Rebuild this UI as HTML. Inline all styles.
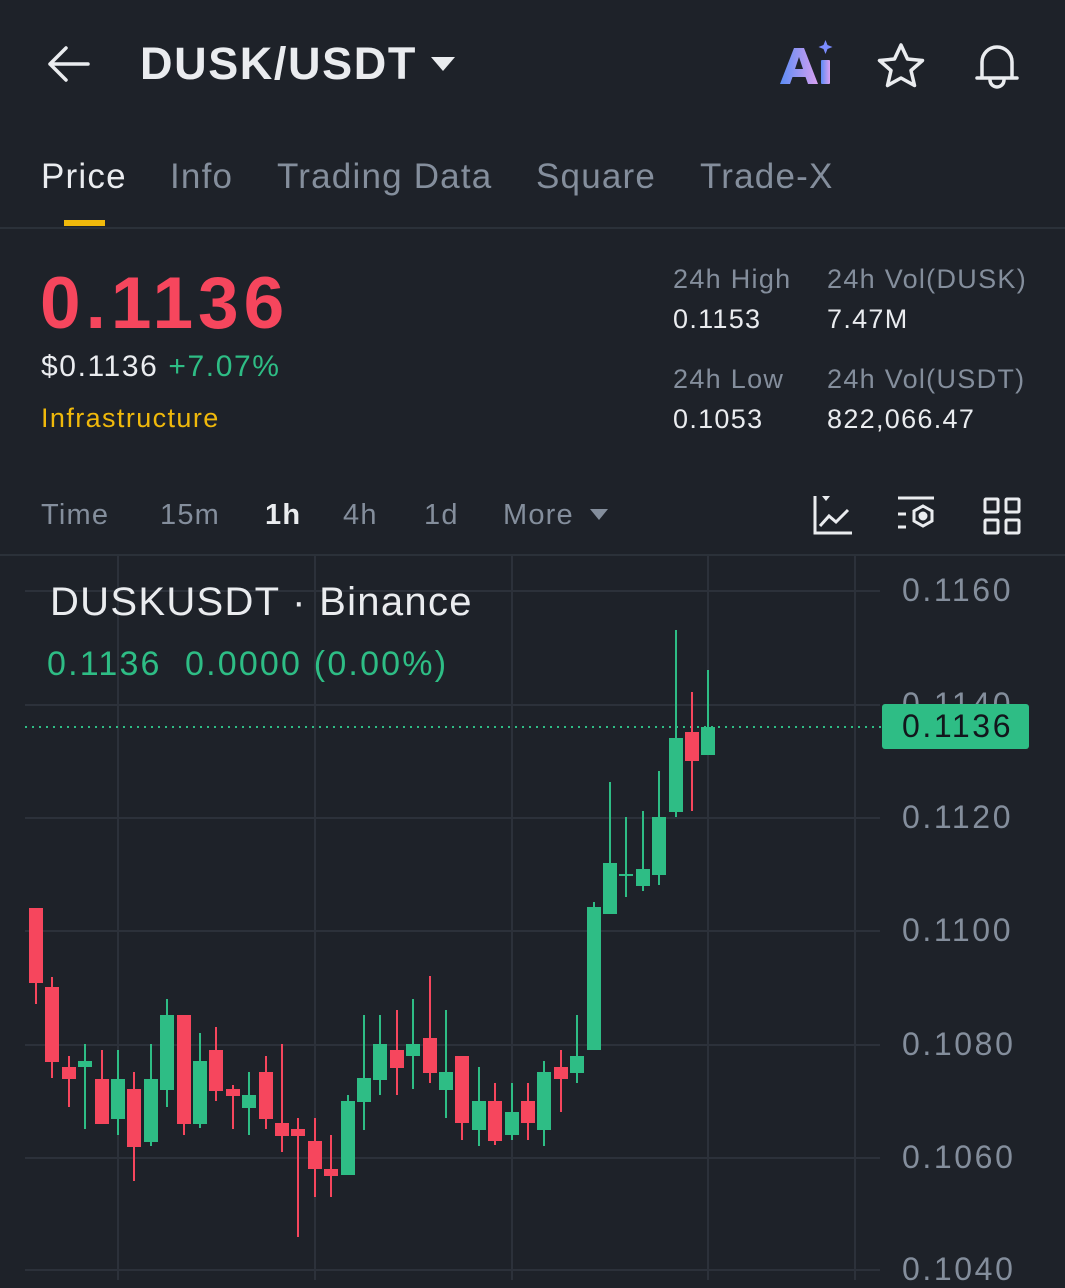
<!DOCTYPE html>
<html><head><meta charset="utf-8"><style>
*{margin:0;padding:0;box-sizing:border-box}
body{width:1065px;height:1280px;background:#1e2229;font-family:"Liberation Sans",sans-serif;color:#eaecef;position:relative;overflow:hidden}
.a{position:absolute;white-space:nowrap}
.g{color:#848e9c}
.t{font-size:35px;letter-spacing:1.2px}
.s{font-size:27px;letter-spacing:1.3px}
.i{font-size:29px;letter-spacing:1.2px}
.ax{font-size:32px;letter-spacing:2.6px}
</style></head><body>
<svg class="a" style="left:44px;top:44px" width="48" height="40" viewBox="0 0 48 40"><path d="M44 20H6M22 4L6 20l16 16" fill="none" stroke="#eaecef" stroke-width="3.5" stroke-linecap="round" stroke-linejoin="round"/></svg>
<div class="a" style="left:140px;top:38px;font-size:45px;font-weight:bold;letter-spacing:1.6px">DUSK/USDT</div>
<svg class="a" style="left:430px;top:56px" width="26" height="16"><path d="M1 1h24L13 15z" fill="#eaecef"/></svg>
<svg class="a" style="left:776px;top:38px" width="60" height="50" viewBox="0 0 60 50">
<defs><linearGradient id="ai" x1="0" x2="1"><stop offset="0" stop-color="#5b8cf5"/><stop offset="1" stop-color="#d8a0f0"/></linearGradient></defs>
<path d="M4 46L18 10h10l14 36h-10l-2.5-7H16.5L14 46z M19 31h8l-4-12z" fill="url(#ai)"/>
<rect x="45" y="22" width="9" height="24" rx="1" fill="url(#ai)"/>
<path d="M49.5 2l2 5 5 2-5 2-2 5-2-5-5-2 5-2z" fill="#7b8cff"/>
</svg>
<svg class="a" style="left:876px;top:42px" width="50" height="46" viewBox="0 0 50 46"><path d="M25 3l6.5 14 15 1.5-11.5 10 3.5 15L25 36l-13.5 7.5 3.5-15L3.5 18.5l15-1.5z" fill="none" stroke="#eaecef" stroke-width="3.5" stroke-linejoin="round"/></svg>
<svg class="a" style="left:972px;top:40px" width="50" height="50" viewBox="0 0 50 50"><path d="M10 38V22a15 15 0 0 1 30 0v16M5 38h40M18 40a7 7 0 0 0 14 0" fill="none" stroke="#eaecef" stroke-width="3.5" stroke-linecap="round" stroke-linejoin="round"/></svg>
<div class="a t" style="left:41px;top:157px">Price</div>
<div class="a g t" style="left:170px;top:157px">Info</div>
<div class="a g t" style="left:277px;top:157px">Trading Data</div>
<div class="a g t" style="left:536px;top:157px">Square</div>
<div class="a g t" style="left:700px;top:157px">Trade-X</div>
<div class="a" style="left:64px;top:220px;width:41px;height:6px;background:#f0b90b"></div>
<div class="a" style="left:0;top:227px;width:1065px;height:2px;background:#2b3139"></div>
<div class="a" style="left:40px;top:262px;font-size:73px;font-weight:bold;color:#f6465d;letter-spacing:5px">0.1136</div>
<div class="a" style="left:41px;top:350px;font-size:30px;letter-spacing:1.6px">$0.1136 <span style="color:#2ebd85">+7.07%</span></div>
<div class="a" style="left:41px;top:403px;font-size:27px;letter-spacing:1.4px;color:#f0b90b">Infrastructure</div>
<div class="a g s" style="left:673px;top:264px">24h High</div>
<div class="a s" style="left:673px;top:304px">0.1153</div>
<div class="a g s" style="left:673px;top:364px">24h Low</div>
<div class="a s" style="left:673px;top:404px">0.1053</div>
<div class="a g s" style="left:827px;top:264px">24h Vol(DUSK)</div>
<div class="a s" style="left:827px;top:304px">7.47M</div>
<div class="a g s" style="left:827px;top:364px">24h Vol(USDT)</div>
<div class="a s" style="left:827px;top:404px">822,066.47</div>
<div class="a g i" style="left:41px;top:499px">Time</div>
<div class="a g i" style="left:160px;top:499px">15m</div>
<div class="a i" style="left:265px;top:499px;font-weight:bold">1h</div>
<div class="a g i" style="left:343px;top:499px">4h</div>
<div class="a g i" style="left:424px;top:499px">1d</div>
<div class="a g i" style="left:503px;top:499px">More</div>
<svg class="a" style="left:589px;top:508px" width="20" height="13"><path d="M1 1h18L10 12z" fill="#848e9c"/></svg>
<svg class="a" style="left:812px;top:494px" width="42" height="42" viewBox="0 0 42 42" fill="none" stroke="#eaecef" stroke-width="3"><path d="M3 2v37h37"/><path d="M8 32l9-10 7 6 12-12"/><path d="M10 2h8l-4 5z" fill="#eaecef" stroke="none"/></svg>
<svg class="a" style="left:896px;top:494px" width="44" height="42" viewBox="0 0 44 42" fill="none" stroke="#eaecef" stroke-width="3"><path d="M2 4h36M2 20h8M2 33h8"/><path d="M27 12l9 5v10l-9 5-9-5V17z"/><circle cx="27" cy="22" r="3" fill="#eaecef"/></svg>
<svg class="a" style="left:982px;top:496px" width="40" height="40" viewBox="0 0 40 40" fill="none" stroke="#eaecef" stroke-width="3"><rect x="3" y="3" width="13" height="13" rx="1"/><rect x="24" y="3" width="13" height="13" rx="1"/><rect x="3" y="24" width="13" height="13" rx="1"/><rect x="24" y="24" width="13" height="13" rx="1"/></svg>
<div class="a" style="left:0;top:554px;width:1065px;height:2px;background:#2b3139"></div>
<svg class="a" style="left:0;top:0" width="1065" height="1280">
<g stroke="#2c313a" stroke-width="2">
<line x1="25" y1="591" x2="880" y2="591"/><line x1="25" y1="705" x2="880" y2="705"/><line x1="25" y1="818" x2="880" y2="818"/><line x1="25" y1="931" x2="880" y2="931"/><line x1="25" y1="1045" x2="880" y2="1045"/><line x1="25" y1="1158" x2="880" y2="1158"/><line x1="25" y1="1270" x2="880" y2="1270"/>
<line x1="118" y1="556" x2="118" y2="1280"/><line x1="315" y1="556" x2="315" y2="1280"/><line x1="512" y1="556" x2="512" y2="1280"/><line x1="708" y1="556" x2="708" y2="1280"/><line x1="855" y1="556" x2="855" y2="1280"/>
</g>
<line x1="25" y1="727" x2="882" y2="727" stroke="#2ebd85" stroke-width="2" stroke-dasharray="2 5"/>
<g fill="#f6465d">
<rect x="35" y="908" width="2" height="96"/><rect x="29" y="908" width="14" height="75"/>
<rect x="51" y="977" width="2" height="101"/><rect x="45" y="987" width="14" height="75"/>
<rect x="68" y="1056" width="2" height="51"/><rect x="62" y="1067" width="14" height="12"/>
<rect x="101" y="1050" width="2" height="74"/><rect x="95" y="1079" width="14" height="45"/>
<rect x="133" y="1072" width="2" height="109"/><rect x="127" y="1089" width="14" height="58"/>
<rect x="183" y="1015" width="2" height="120"/><rect x="177" y="1015" width="14" height="109"/>
<rect x="215" y="1027" width="2" height="74"/><rect x="209" y="1050" width="14" height="41"/>
<rect x="232" y="1085" width="2" height="44"/><rect x="226" y="1089" width="14" height="7"/>
<rect x="265" y="1056" width="2" height="73"/><rect x="259" y="1072" width="14" height="47"/>
<rect x="281" y="1044" width="2" height="108"/><rect x="275" y="1123" width="14" height="13"/>
<rect x="297" y="1118" width="2" height="119"/><rect x="291" y="1129" width="14" height="7"/>
<rect x="314" y="1118" width="2" height="79"/><rect x="308" y="1141" width="14" height="28"/>
<rect x="330" y="1135" width="2" height="62"/><rect x="324" y="1169" width="14" height="7"/>
<rect x="396" y="1010" width="2" height="85"/><rect x="390" y="1050" width="14" height="18"/>
<rect x="429" y="976" width="2" height="107"/><rect x="423" y="1038" width="14" height="35"/>
<rect x="461" y="1056" width="2" height="84"/><rect x="455" y="1056" width="14" height="67"/>
<rect x="494" y="1083" width="2" height="62"/><rect x="488" y="1101" width="14" height="40"/>
<rect x="527" y="1083" width="2" height="57"/><rect x="521" y="1101" width="14" height="22"/>
<rect x="560" y="1050" width="2" height="62"/><rect x="554" y="1067" width="14" height="12"/>
<rect x="691" y="692" width="2" height="119"/><rect x="685" y="732" width="14" height="29"/>
</g>
<g fill="#2ebd85">
<rect x="84" y="1044" width="2" height="85"/><rect x="78" y="1061" width="14" height="6"/>
<rect x="117" y="1050" width="2" height="85"/><rect x="111" y="1079" width="14" height="40"/>
<rect x="150" y="1044" width="2" height="102"/><rect x="144" y="1079" width="14" height="63"/>
<rect x="166" y="999" width="2" height="108"/><rect x="160" y="1015" width="14" height="75"/>
<rect x="199" y="1033" width="2" height="95"/><rect x="193" y="1061" width="14" height="63"/>
<rect x="248" y="1072" width="2" height="63"/><rect x="242" y="1095" width="14" height="13"/>
<rect x="347" y="1095" width="2" height="80"/><rect x="341" y="1101" width="14" height="74"/>
<rect x="363" y="1015" width="2" height="115"/><rect x="357" y="1078" width="14" height="24"/>
<rect x="379" y="1015" width="2" height="80"/><rect x="373" y="1044" width="14" height="36"/>
<rect x="412" y="999" width="2" height="90"/><rect x="406" y="1044" width="14" height="12"/>
<rect x="445" y="1010" width="2" height="108"/><rect x="439" y="1072" width="14" height="18"/>
<rect x="478" y="1067" width="2" height="79"/><rect x="472" y="1101" width="14" height="29"/>
<rect x="511" y="1083" width="2" height="57"/><rect x="505" y="1112" width="14" height="23"/>
<rect x="543" y="1061" width="2" height="85"/><rect x="537" y="1072" width="14" height="58"/>
<rect x="576" y="1015" width="2" height="68"/><rect x="570" y="1056" width="14" height="17"/>
<rect x="593" y="902" width="2" height="148"/><rect x="587" y="907" width="14" height="143"/>
<rect x="609" y="782" width="2" height="132"/><rect x="603" y="863" width="14" height="51"/>
<rect x="625" y="817" width="2" height="80"/><rect x="619" y="874" width="14" height="2"/>
<rect x="642" y="811" width="2" height="80"/><rect x="636" y="869" width="14" height="17"/>
<rect x="658" y="771" width="2" height="114"/><rect x="652" y="817" width="14" height="58"/>
<rect x="675" y="630" width="2" height="187"/><rect x="669" y="738" width="14" height="74"/>
<rect x="707" y="670" width="2" height="85"/><rect x="701" y="727" width="14" height="28"/>
</g>
</svg>
<div class="a" style="left:50px;top:580px;font-size:40px;letter-spacing:1.3px">DUSKUSDT · Binance</div>
<div class="a" style="left:47px;top:645px;font-size:34px;letter-spacing:2.2px;color:#2ebd85">0.1136&nbsp; 0.0000 (0.00%)</div>
<div class="a g ax" style="left:902px;top:572px">0.1160</div>
<div class="a g ax" style="left:902px;top:686px">0.1140</div>
<div class="a g ax" style="left:902px;top:799px">0.1120</div>
<div class="a g ax" style="left:902px;top:912px">0.1100</div>
<div class="a g ax" style="left:902px;top:1026px">0.1080</div>
<div class="a g ax" style="left:902px;top:1139px">0.1060</div>
<div class="a g ax" style="left:902px;top:1251px">0.1040</div>
<div class="a ax" style="left:882px;top:704px;width:147px;height:45px;background:#2ebd85;border-radius:3px;color:#12161c;line-height:45px;padding-left:20px">0.1136</div>
</body></html>
